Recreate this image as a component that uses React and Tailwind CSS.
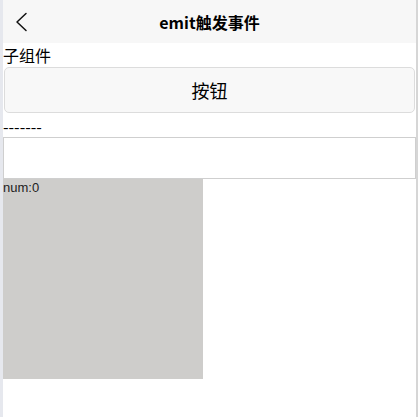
export default function App() {
    return (
        <div className="flex h-[417px] w-[418px] bg-white" style={{ fontFamily: '"Noto Sans CJK SC", "Noto Sans", sans-serif' }}>
            <div className="w-[3px] shrink-0 bg-[#e6e8ee]" />
            <div className="flex-1 min-w-0 flex flex-col">
                <div className="relative h-[43px] bg-[#f7f7f7] flex items-center justify-center">
                    <svg className="absolute left-[12px] top-[12px]" width="14" height="20" viewBox="0 0 14 20" fill="none">
                        <polyline points="11,1.5 2,10 11,18.5" stroke="#111" strokeWidth="1.5" strokeLinecap="round" strokeLinejoin="round" />
                    </svg>
                    <span className="text-[16px] font-bold text-black">emit触发事件</span>
                </div>
                <div className="text-[16px] leading-[24px] text-black">子组件</div>
                <button className="mx-[1px] h-[46px] rounded-[5px] border border-[#dcdcdc] bg-[#f8f8f8] text-[18px] text-black">按钮</button>
                <div className="h-[24px] text-[16px] leading-[26px] text-black">-------</div>
                <div className="h-[42px] border border-[#cfcfcf] bg-white" />
                <div className="h-[200px] w-[200px] bg-[#cecdcb] text-[13px] leading-[18px] text-[#222]" style={{ fontFamily: '"Liberation Sans", Arial, sans-serif' }}>num:0</div>
            </div>
            <div className="w-[2px] shrink-0 bg-[#d6d6d6]" />
        </div>
    )
}
